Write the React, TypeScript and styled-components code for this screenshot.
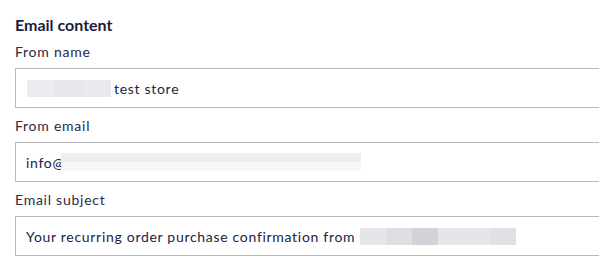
import * as React from 'react';
import styled, { createGlobalStyle } from 'styled-components';

const GlobalStyle = createGlobalStyle`
    html, body {
        margin: 0;
        padding: 0;
        background: #ffffff;
        overflow: hidden;
    }
    body {
        font-family: Lato, "Open Sans", sans-serif;
        color: #1f1f3d;
    }
`;

const Section = styled.section`
    width: 640px;
    padding: 15px 0 0 15px;
`;

const Heading = styled.h2`
    margin: 0 0 7px 0;
    font-size: 16px;
    line-height: 20px;
    font-weight: 700;
    color: #1c1c3c;
`;

const Field = styled.div`
    display: flex;
    flex-direction: column;
    gap: 6px;
    margin-bottom: 8px;
`;

const Label = styled.label`
    font-size: 14px;
    line-height: 20px;
    color: #2a2a47;
    letter-spacing: 0.75px;
`;

const InputBox = styled.div`
    box-sizing: border-box;
    display: flex;
    align-items: center;
    height: 40px;
    padding: 0 10px;
    border: 1px solid #b8b8c1;
    font-size: 14px;
    color: #23233f;
    letter-spacing: 0.7px;
    white-space: nowrap;
`;

const Blur = styled.span<{ $w: number; $h?: number; $tone: string; $under?: string }>`
    display: inline-block;
    width: ${p => p.$w}px;
    height: ${p => p.$h || 17}px;
    background: linear-gradient(${p => p.$tone} 0 ${p => (p.$under ? '50%' : '100%')}, ${p => p.$under || p.$tone} 0);
`;

const BlurGroup = styled.span<{ $left?: number; $right?: number }>`
    display: inline-flex;
    margin-left: ${p => p.$left || 0}px;
    margin-right: ${p => p.$right || 0}px;
`;

const nameTones = ['#ebebf0', '#e6e6ec', '#e9e9ee'];
const subjectTones = ['#e6e6ea', '#dedee3', '#d2d3d8', '#e6e6ea', '#e6e6ea', '#e0e0e5'];

export default function App() {
    return (
        <>
            <GlobalStyle />
            <Section>
                <Heading>Email content</Heading>
                <Field>
                    <Label>From name</Label>
                    <InputBox>
                        <BlurGroup $left={1} $right={3}>
                            {nameTones.map((t, i) => <Blur key={i} $w={28} $tone={t} />)}
                        </BlurGroup>
                        test store
                    </InputBox>
                </Field>
                <Field>
                    <Label>From email</Label>
                    <InputBox>
                        info@
                        <BlurGroup $left={-4}>
                            <Blur $w={300} $h={18} $tone="#eeeef2" $under="#f7f7fa" />
                        </BlurGroup>
                    </InputBox>
                </Field>
                <Field>
                    <Label>Email subject</Label>
                    <InputBox>
                        Your recurring order purchase confirmation from
                        <BlurGroup $left={5}>
                            {subjectTones.map((t, i) => <Blur key={i} $w={26} $tone={t} />)}
                        </BlurGroup>
                    </InputBox>
                </Field>
                <Field>
                    <Label>Preview text</Label>
                </Field>
            </Section>
        </>
    );
}
